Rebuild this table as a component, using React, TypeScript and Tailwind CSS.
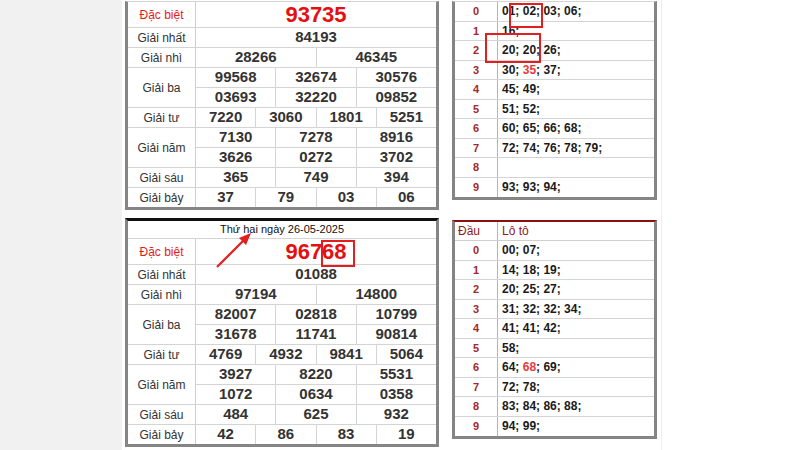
const font = { fontFamily: '"Liberation Sans", Arial, sans-serif' }

type Prize = { label: string; rows: string[][]; special?: boolean }

const top: Prize[] = [
  { label: 'Đặc biệt', rows: [['93735']], special: true },
  { label: 'Giải nhất', rows: [['84193']] },
  { label: 'Giải nhì', rows: [['28266', '46345']] },
  { label: 'Giải ba', rows: [['99568', '32674', '30576'], ['03693', '32220', '09852']] },
  { label: 'Giải tư', rows: [['7220', '3060', '1801', '5251']] },
  { label: 'Giải năm', rows: [['7130', '7278', '8916'], ['3626', '0272', '3702']] },
  { label: 'Giải sáu', rows: [['365', '749', '394']] },
  { label: 'Giải bảy', rows: [['37', '79', '03', '06']] },
]

const bottom: Prize[] = [
  { label: 'Đặc biệt', rows: [['96768']], special: true },
  { label: 'Giải nhất', rows: [['01088']] },
  { label: 'Giải nhì', rows: [['97194', '14800']] },
  { label: 'Giải ba', rows: [['82007', '02818', '10799'], ['31678', '11741', '90814']] },
  { label: 'Giải tư', rows: [['4769', '4932', '9841', '5064']] },
  { label: 'Giải năm', rows: [['3927', '8220', '5531'], ['1072', '0634', '0358']] },
  { label: 'Giải sáu', rows: [['484', '625', '932']] },
  { label: 'Giải bảy', rows: [['42', '86', '83', '19']] },
]

const lotoTop: string[][] = [
  ['01', '02', '03', '06'],
  ['16'],
  ['20', '20', '26'],
  ['30', '*35', '37'],
  ['45', '49'],
  ['51', '52'],
  ['60', '65', '66', '68'],
  ['72', '74', '76', '78', '79'],
  [],
  ['93', '93', '94'],
]

const lotoBottom: string[][] = [
  ['00', '07'],
  ['14', '18', '19'],
  ['20', '25', '27'],
  ['31', '32', '32', '34'],
  ['41', '41', '42'],
  ['58'],
  ['64', '*68', '69'],
  ['72', '78'],
  ['83', '84', '86', '88'],
  ['94', '99'],
]

// top tables are scrolled past their header, only the row line shows
function PrizeTable({ prizes, title }: { prizes: Prize[]; title?: string }) {
  return (
    <div
      className={`w-[314px] border-x-[3px] border-b-[3px] border-[#858585] bg-white ${
        title ? 'border-t-[3px] border-t-[#111]' : 'mt-[1px] border-t border-t-[#d4d4d4]'
      }`}
    >
      {title && (
        <div className="h-[18px] border-b border-[#d4d4d4] flex items-center justify-center text-[11px] text-[#111]">
          {title}
        </div>
      )}
      {prizes.map((p) => (
        <div key={p.label} className="flex border-b border-[#d4d4d4] last:border-b-0">
          <div
            className={`w-[68px] shrink-0 border-r border-[#cfcfcf] flex items-center justify-center text-[12px] ${
              p.special ? 'text-[#e31b1b]' : 'text-[#333]'
            }`}
          >
            {p.label}
          </div>
          <div className="flex-1 flex flex-col">
            {p.rows.map((r, i) => (
              <div
                key={i}
                className={`flex ${p.special ? 'h-[25px]' : i > 0 ? 'h-[20px]' : 'h-[19px]'} ${
                  i > 0 ? 'border-t border-[#d4d4d4]' : ''
                }`}
              >
                {r.map((v, j) => (
                  <div
                    key={j}
                    className={`flex-1 flex items-center justify-center font-bold ${
                      j > 0 ? 'border-l border-[#d4d4d4]' : ''
                    } ${p.special ? 'text-[22px] text-[#e60f0f]' : 'text-[15px] text-[#333]'}`}
                  >
                    {v}
                  </div>
                ))}
              </div>
            ))}
          </div>
        </div>
      ))}
    </div>
  )
}

function LotoTable({ data, header }: { data: string[][]; header?: boolean }) {
  return (
    <div
      className={`w-[205px] border-x-[3px] border-b-[3px] border-[#858585] bg-white ${
        header ? 'border-t-2 border-t-[#8b1010]' : 'mt-[1px] border-t border-t-[#d4d4d4]'
      }`}
    >
      {header && (
        <div className="flex h-[19px] border-b border-[#cfcfcf] text-[12px] text-[#8b1a1a]">
          <div className="w-[43px] shrink-0 border-r border-[#b5b5b5] pl-[3px] flex items-center">Đầu</div>
          <div className="pl-[4px] flex items-center">Lô tô</div>
        </div>
      )}
      {data.map((vals, d) => (
        <div key={d} className="flex h-[19.5px] border-b border-[#d4d4d4] last:border-b-0">
          <div className="w-[43px] shrink-0 border-r border-[#b5b5b5] flex items-center justify-center text-[11px] font-bold text-[#a2282a]">
            {d}
          </div>
          <div className="pl-[4px] flex items-center text-[12px] font-bold text-[#1a1a1a] whitespace-pre">
            {vals.map((v, i) => (
              <span key={i}>
                {v.startsWith('*') ? <span className="text-[#e8393b]">{v.slice(1)}</span> : v}
                {';'}
                {i < vals.length - 1 ? ' ' : ''}
              </span>
            ))}
          </div>
        </div>
      ))}
    </div>
  )
}

export default function App() {
  return (
    <div className="relative w-[800px] h-[450px] overflow-hidden bg-white flex" style={font}>
      <div className="w-[122px] shrink-0 bg-[#f1f1f1]" />
      <div className="flex gap-[13px] pl-[3px]">
        <div className="flex flex-col gap-[8px]">
          <PrizeTable prizes={top} />
          <PrizeTable prizes={bottom} title="Thứ hai ngày 26-05-2025" />
        </div>
        <div className="flex flex-col gap-[20px]">
          <LotoTable data={lotoTop} />
          <LotoTable data={lotoBottom} header />
        </div>
      </div>
      <div className="ml-[4px] w-px bg-[#eeeeee]" />

      {/* annotations */}
      <div className="absolute left-[509px] top-[3px] w-[34px] h-[25px] border-2 border-[#e01f1f]" />
      <div className="absolute left-[485px] top-[33px] w-[56px] h-[30px] border-2 border-[#e01f1f]" />
      <div className="absolute left-[321px] top-[240px] w-[34px] h-[27px] border-2 border-[#e01f1f]" />
      <svg className="absolute left-0 top-0" width="800" height="450">
        <line x1="217" y1="267" x2="244" y2="240" stroke="#e01f1f" strokeWidth="2.2" />
        <polygon points="251,233 239,238 246,245" fill="#e01f1f" />
      </svg>
    </div>
  )
}
